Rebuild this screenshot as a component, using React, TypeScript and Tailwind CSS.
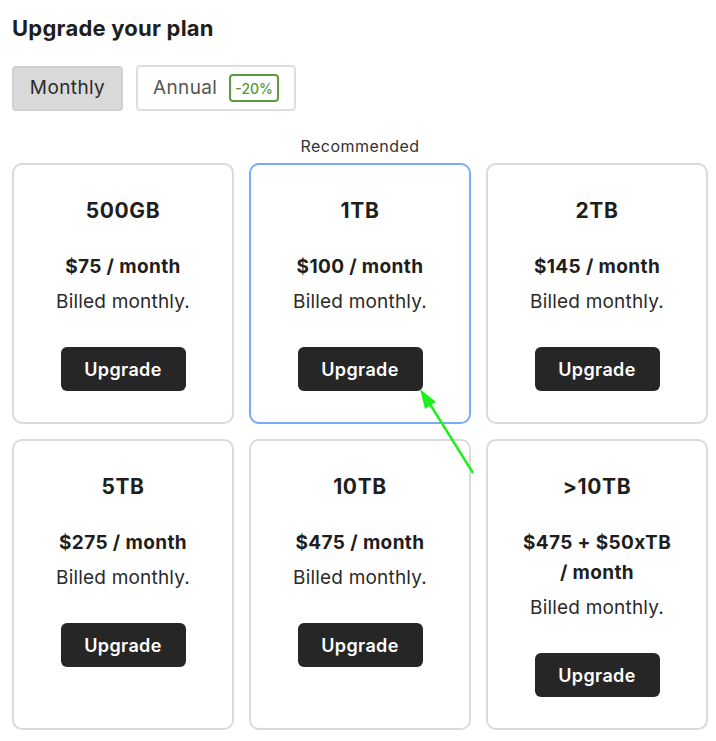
import React from "react";

interface Plan {
  size: string;
  price: string[];
  recommended?: boolean;
}

const plans: Plan[] = [
  { size: "500GB", price: ["$75 / month"] },
  { size: "1TB", price: ["$100 / month"], recommended: true },
  { size: "2TB", price: ["$145 / month"] },
  { size: "5TB", price: ["$275 / month"] },
  { size: "10TB", price: ["$475 / month"] },
  { size: ">10TB", price: ["$475 + $50xTB", "/ month"] },
];

function PlanCard({ plan }: { plan: Plan }) {
  return (
    <div
      className={
        "flex flex-col items-center rounded-[10px] bg-white pt-[32px] pb-[31px] " +
        (plan.recommended ? "border-2 border-[#78acf6]" : "border-2 border-[#dadada]")
      }
    >
      <h3 className="text-[21px] leading-[28px] font-bold tracking-[0.03em] text-[#1e1e1e]">{plan.size}</h3>
      <div className="mt-[27px] text-center text-[19px] leading-[30px] font-bold tracking-[0.02em] text-[#1e1e1e]">
        {plan.price.map((line) => (
          <div key={line}>{line}</div>
        ))}
      </div>
      <p className="mt-[5px] text-[19px] leading-[30px] tracking-[0.01em] text-[#2a2a2a]">Billed monthly.</p>
      <button className="mt-[30px] h-[44px] w-[125px] rounded-[6px] bg-[#262626] text-[18px] font-semibold tracking-[0.02em] text-white">
        Upgrade
      </button>
    </div>
  );
}

export default function App() {
  return (
    <div className="relative h-[741px] w-[716px] bg-white pl-3 pr-2 font-['Inter',_'Liberation_Sans',_sans-serif]">
      <h1 className="pt-[14px] text-[22px] leading-[28px] font-bold tracking-[0.01em] text-[#1e1e1e]">Upgrade your plan</h1>

      <div className="mt-[23px] flex items-center gap-[13px]">
        <button className="h-[45px] w-[111px] rounded-[4px] border-2 border-[#d0d0d0] bg-[#d9d9d9] text-[19px] tracking-[0.02em] text-[#2a2a2a]">
          Monthly
        </button>
        <button className="flex h-[46px] w-[160px] items-center gap-[12px] rounded-[4px] border-2 border-[#dedede] bg-white pl-[15px] text-[19px] tracking-[0.02em] text-[#555]">
          Annual
          <span className="flex h-[28px] items-center rounded-[4px] border-2 border-[#5c9a40] px-[4px] text-[14px] font-medium tracking-normal text-[#4f9a32]">
            -20%
          </span>
        </button>
      </div>

      <div className="mt-[26px] grid grid-cols-3 gap-[15px]">
        <div />
        <div className="text-center text-[16px] leading-[18px] tracking-[0.03em] text-[#333]">Recommended</div>
        <div />
      </div>

      <div className="mt-[8px] grid grid-cols-3 gap-[15px]">
        {plans.map((p) => (
          <PlanCard key={p.size} plan={p} />
        ))}
      </div>

      <svg className="pointer-events-none absolute left-0 top-0" width="716" height="741">
        <line x1="473" y1="473" x2="428" y2="401" stroke="#1ef01e" strokeWidth="2.5" />
        <polygon points="420,389 436,402 425,409" fill="#1ef01e" />
      </svg>
    </div>
  );
}
